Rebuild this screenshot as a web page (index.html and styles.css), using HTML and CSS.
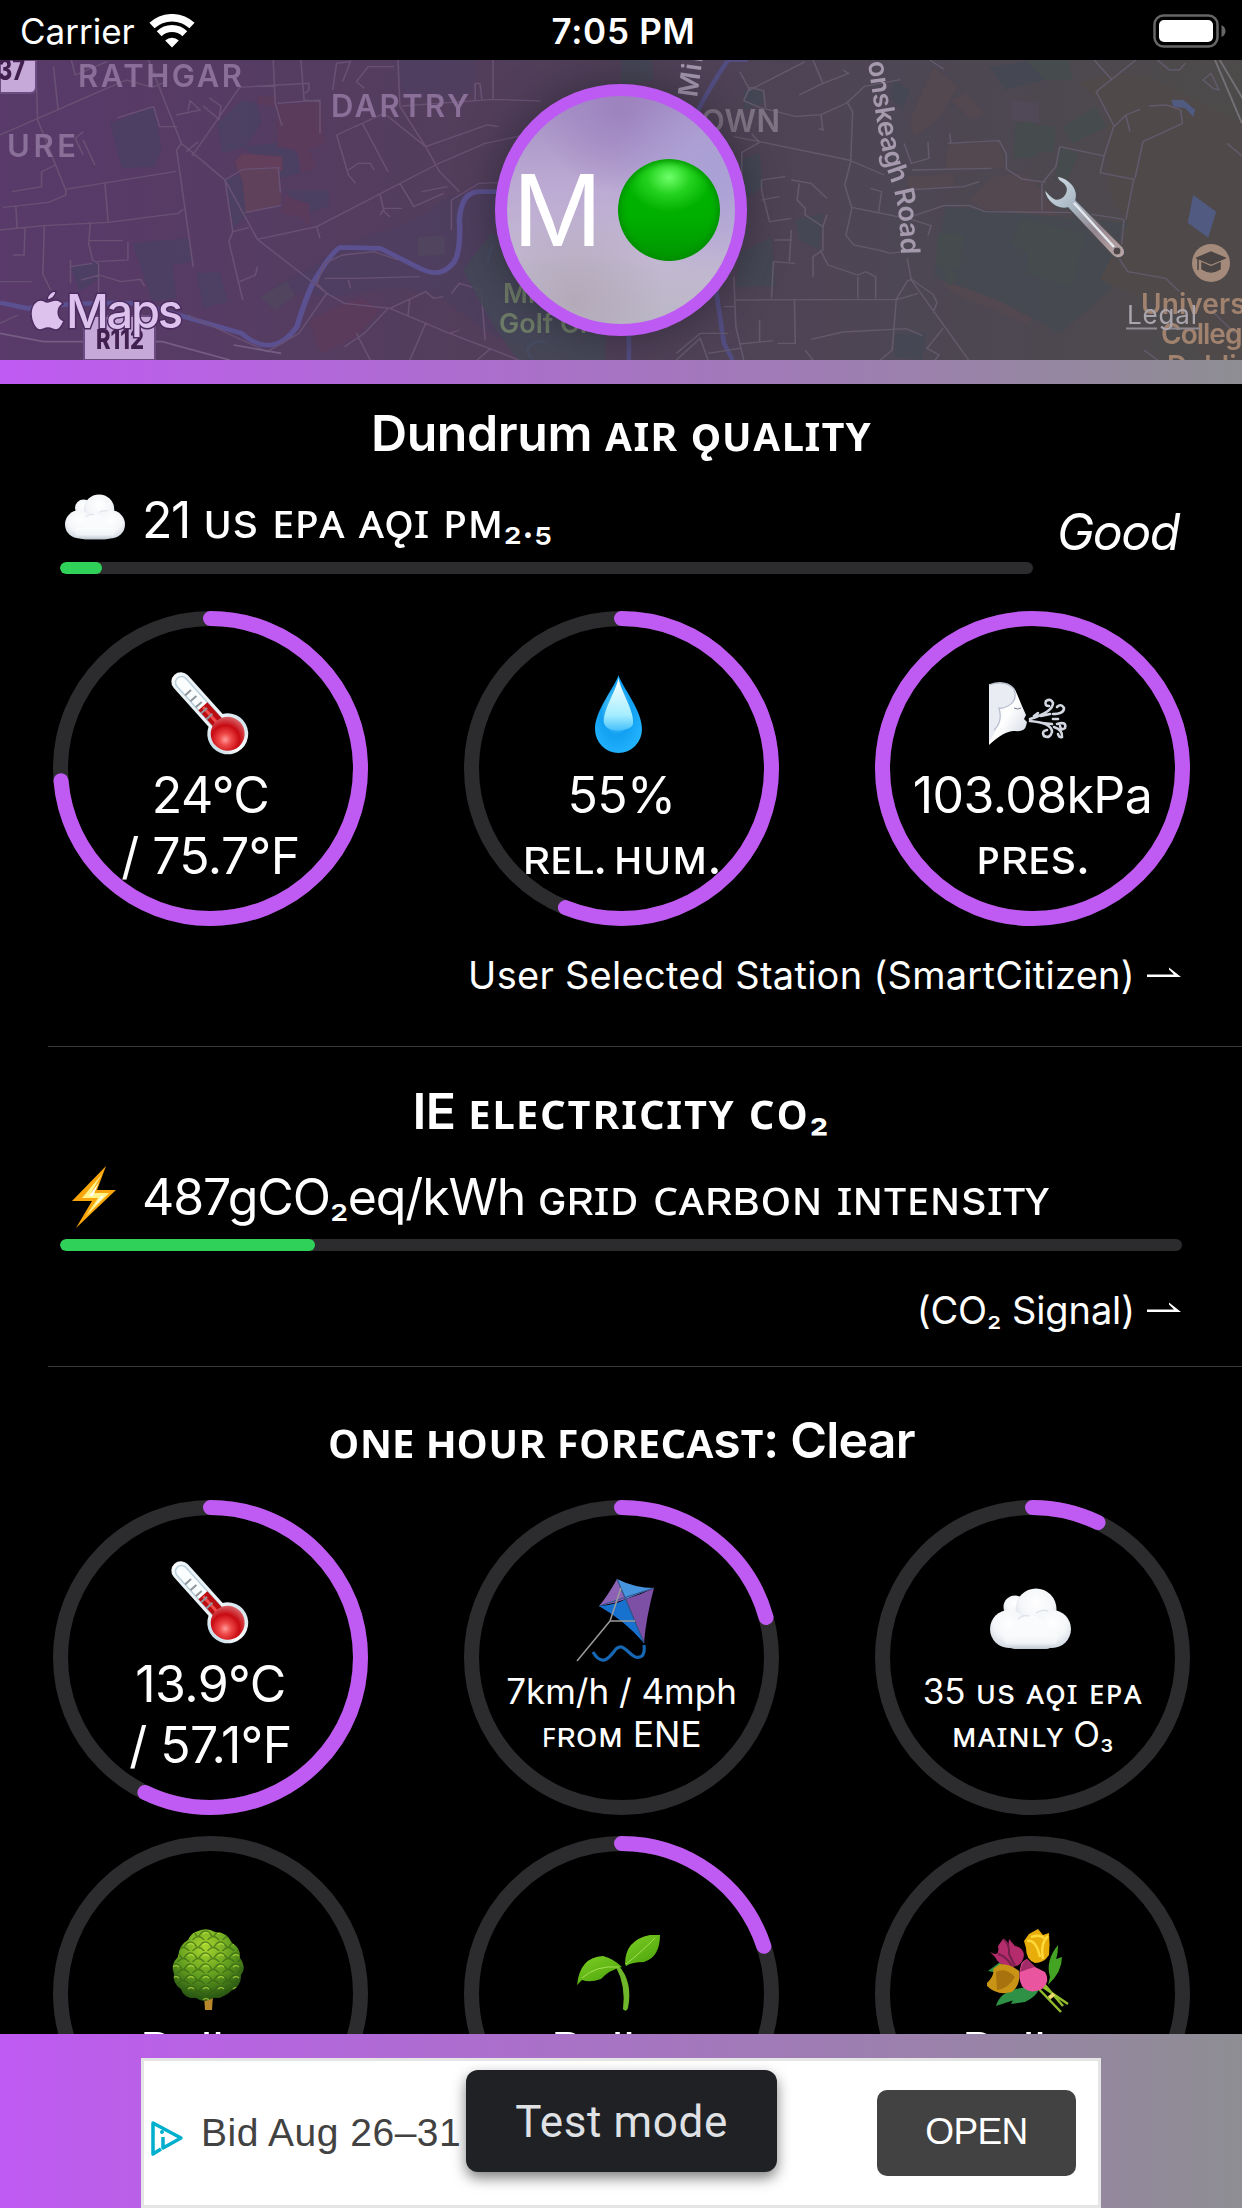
FILE: index.html
```html
<!DOCTYPE html>
<html lang="en">
<head>
<meta charset="utf-8">
<title>Air quality</title>
<link rel="stylesheet" href="styles.css">
</head>
<body>
<svg class="defs" width="0" height="0" aria-hidden="true">
  <defs>
    <linearGradient id="glass" x1="0" y1="0" x2="1" y2="0"><stop offset="0" stop-color="#c4dbe6"/><stop offset=".45" stop-color="#fff"/><stop offset="1" stop-color="#d4e4ec"/></linearGradient>
    <radialGradient id="bulb" cx=".33" cy=".58" r=".7"><stop offset="0" stop-color="#ff9a9a"/><stop offset=".25" stop-color="#ee4848"/><stop offset=".6" stop-color="#c80a12"/><stop offset="1" stop-color="#d86a6e"/></radialGradient>
    <radialGradient id="puff" cx=".5" cy=".35" r=".65"><stop offset="0" stop-color="#fff"/><stop offset=".6" stop-color="#f4f6f9"/><stop offset="1" stop-color="#d3dae2"/></radialGradient>
    <linearGradient id="puffBase" x1="0" y1="0" x2="0" y2="1"><stop offset="0" stop-color="#fbfcfd"/><stop offset=".6" stop-color="#f0f3f6"/><stop offset="1" stop-color="#bdc7d1"/></linearGradient>
    <symbol id="thermometer" viewBox="0 0 80 80" overflow="visible">
      <g transform="rotate(-42 59 59)">
        <path d="M49.500 -10a9.500 9.500 0 0 1 19 0V42a20.500 20.500 0 1 1 -19 0Z" fill="url(#glass)"/>
        <path d="M53 -9a6 6 0 0 1 12 0V45H53Z" fill="#fbfeff" stroke="#b9d0dc" stroke-width="1.500"/>
        <path d="M53 23h12v22h-12z" fill="#b90d12"/><path d="M57 24h3v22h-3z" fill="#ee4d4d"/>
        <path d="M53 3h8M53 11h8M53 19h8M53 27h8M53 35h8" stroke="#8f979c" stroke-width="2"/>
        <circle cx="59" cy="60" r="17" fill="url(#bulb)"/>
      </g>
    </symbol>
    <symbol id="cloud" viewBox="0 0 81 62" overflow="visible">
      <circle cx="25" cy="19" r="11.500" fill="url(#puff)"/><circle cx="46" cy="21" r="20.500" fill="url(#puff)"/>
      <rect x="12" y="28" width="58" height="33" rx="16" fill="url(#puffBase)"/>
      <circle cx="19" cy="41" r="19" fill="url(#puff)"/><circle cx="62" cy="41" r="19" fill="url(#puff)"/>
      <ellipse cx="40" cy="43" rx="18" ry="15" fill="#fafbfd"/>
      <path d="M14 46h54v4q-2 11-14 11H26q-11 0-12-11Z" fill="url(#puffBase)"/>
      <path d="M28 31q5-5 11-3M46 25q6-4 12-2" fill="none" stroke="#dfe4ea" stroke-width="1.500"/>
    </symbol>
  </defs>
</svg>

<header class="status">
  <div class="status-left"><span>Carrier</span>
    <svg width="46" height="34" viewBox="0 0 46 34"><g fill="none" stroke="#fff"><path d="M3 11.600A29.300 29.300 0 0 1 43 11.600" stroke-width="7.500"/><path d="M10.200 19.700A18.500 18.500 0 0 1 35.800 19.700" stroke-width="7"/></g><path d="M23 33.500L16.200 26.500A9.500 9.500 0 0 1 29.800 26.500Z" fill="#fff"/></svg>
  </div>
  <div class="status-time">7:05 PM</div>
  <div class="status-right">
    <svg width="74" height="34" viewBox="0 0 74 34"><rect x="1.500" y="1.500" width="63" height="31" rx="9" fill="none" stroke="#666" stroke-width="2.500"/><rect x="6" y="6" width="54" height="22" rx="5" fill="#fff"/><path d="M68.500 11q4 2 4 6t-4 6z" fill="#666"/></svg>
  </div>
</header>

<section class="map">
  <svg class="map-art" width="1242" height="300" viewBox="0 60 1242 300">
    <defs>
      <linearGradient id="land" x1="0" y1="0" x2="1" y2="0"><stop offset="0" stop-color="#593a6a"/><stop offset=".5" stop-color="#503f57"/><stop offset=".72" stop-color="#4d4654"/><stop offset="1" stop-color="#4d4b4a"/></linearGradient>
      <path id="roadLine" d="M868 62C874 105 880 150 890 178S900 225 901 259"/>
    </defs>
    <rect y="60" width="1242" height="300" fill="url(#land)"/>
    <g transform="scale(.396 .33333)">
      <g opacity=".8">
      <g fill="#4a4163"><path d="M278 370l110-50 20 130-20 50-80 5zM335 730l140-15 10 70-50 10 10 100-60 10zM495 820l60-5 20 90-60 20zM180 800l70-15 0 50-50 40zM550 370l60-70 40 10 10 60-40 70-60 20zM615 440l100-15 60 60 0 30-70 20zM720 570l110 0 0 50-60 20zM565 540l50-20 10 120-35 45z"/><path d="M680 870l110-70 60-60 200-80 80-70 130-20 80 60 100 300-30 120-160-40-140-120-100-30-160 30z" opacity=".45"/><path d="M1000 180h200v100l-80 20-100-20z" opacity=".35"/></g>
      <g fill="#5d3b5c"><path d="M700 315l110-10 10 125-40 20 20 50-40 20-10-70-50-10zM650 290l50 0 0 30-50-10zM720 590l60 20 0 70-20-30-50-10zM780 960l130-70 50 40-60 80-90 50z"/></g>
      <path d="M593 485l20-25 100 10 0 40-95 50z" fill="#67405b"/><path d="M608 510l95-8 8 110-90 28z" fill="#63435b"/>
      <g fill="#514760"><path d="M658 890l65-48 22 42-50 48zM1055 710l68-3v58l-68 3z"/></g>
      </g>
      <path d="M0 908L70 925Q200 905 350 910L480 955 610 1000Q690 1080 750 980 770 900 790 850 840 750 860 742L960 745 1060 805Q1110 835 1140 795 1165 770 1160 660 1165 575 1210 575H1260" fill="none" stroke="#5b5190" stroke-width="14"/>
      <path d="M1245 728l-14 56M1345 1075q-30-30 10-50h25" fill="none" stroke="#50558c" stroke-width="7"/>
      <g fill="none" stroke="#695174" stroke-width="4">
        <path d="M90 180L95 360 165 568 445 514M0 405L240 280 320 240 385 262 420 245M135 200l12 132M180 180l10 45 80-40M375 180L458 430 568 540 650 718 825 880 870 910 985 925 1135 1000 1235 1045 1310 1080M690 180l5 130 17 68M760 180l8 120 40 5 0 95M0 690L110 677 272 667 450 640 463 628M458 430l-12 20 30 250 12 102M388 320l-92 34M388 320l15 60 45 0M485 468L605 262 780 250v20l-10 10M265 550l8 115M30 575l75-15V515l35-20M8 622l115-15 43-22V568M40 618l3 65M63 683l-2 82-28 0M112 677l-4 145 20 48M228 667l-4 65 10 48 15 12 0 95M225 722h85M323 725v55l-78 5M178 780v70M178 800l55-10M205 840l45-15 55 20 50-7 10 20M0 845h80M0 970l45-25M445 345l60-15-25-28-5 30M513 318l40 40 5-40-30-25M470 455l30-30M240 495l-30-75M210 395l-20 20 20 50M568 540l45-32 90-5 5 75M568 540l20 155-10 30 35 175M618 638l92-22M588 695l40-12M650 718l150-38 8 35M800 680L1105 492 1225 430 1345 400M850 405l30 120 18 25M850 405L970 340 1075 440 1110 515 1160 575M880 510l25-20 30 0 10 20M915 370l65 145M1005 180l5 140 65 120M1015 318l230-20 120 5M1075 440L1230 375l30 5M960 585l10 50 15 15 0 0M960 645l10-20 45 0M1010 550l35 70 75-40M1065 575l65-15M1140 690v-90l70-50 50-2M605 845l40-20 5-25M820 835h80l160-5M825 880l-25-30 20-60 45-25 80-10 60 25M880 840l5 25M825 880l-70 120-80 55-200-110M870 1040l50-40 60-75M900 1000l35 80M985 925l90-50 20 20 25-5M1035 895l-5 55M1075 970l-40 110M1135 1000l25-10M1140 880l20-30 55 20 10 150M1240 1045l-35 35M700 310l110-10M840 270l10-80 35-5-20 60M900 245l30-45 65 0M900 245l20 20M1200 300v-50l12 0 5 50M1245 180v120"/>
        <path d="M0 1000l110 25h300l170 55M590 1035l120 25" stroke-width="5" stroke="#755d83"/>
      </g>
      <path d="M1240 700q70 40 90 160l200 60v160h-220q-70-100-140-270z" fill="#434956" opacity=".8"/>
    </g>
    <g transform="translate(621 0) scale(.396 .33333)">
      <path d="M320 180L270 180Q230 250 190 340M240 870l20 160 22 50M20 1000v80" stroke="#524d80" stroke-width="12" fill="none"/>
      <g opacity=".7">
      <g fill="#424955"><path d="M300 480l50-20 10 100-50 40zM300 760l80-50 10 150-100 0zM440 660l70-20-10 110-50-30zM690 1000l80 0-10 80-70-10zM310 270l50 0 0 40-50 20zM930 200l120-20 20 60-100 30zM0 180h80v60l-80 20zM690 240l40 30-20 60-30-40z"/></g>
      <g fill="#574950"><path d="M730 360l60-160 60 60-50 100-60 50zM825 435l130-10 15 80-150 5zM835 300l40-20 40 60-30 20zM880 600l60-70 80-10 60 70 20 60-180-20zM720 530l120-10 0 40-110 10zM810 850l150 20 120 60-60 40-180-90zM1040 860l40 10 0 30-30-10z"/></g>
      <path d="M820 620l460 50 0 150-170 180-160-100-160-70z" fill="#444b52"/>
      <path d="M1160 250q120-70 260 30l150 90v710h-100l-60-140-200-100 70-170-50-100 0-240z" fill="#514a49"/>
      <g fill="#434e4d"><path d="M995 370l52-10 5 110-60 5zM1050 375l48 5-5 75-45 0zM1115 380l85-60 25 60-85 50zM800 700l65 5-10 100-60-10zM1015 655l155 50-30 155-115-40 5-60-45-30zM1110 440l45 20-30 90-30-10zM1020 180l110 0 10 60-70 0zM800 770l50 60-20 30z"/></g>
      <path d="M985 300l70 10 0 60-70-10z" fill="#534a5a"/>
      </g>
      <path d="M1445 585l58 50-20 78-52-45zM1390 300l30 0 30 30-5 20-20-25-30-5z" fill="#515a80"/>
      <g fill="none" stroke="#625a6b" stroke-width="4">
        <path d="M300 215l25 55 140-85M485 180l25 70 65-30-15-10M510 250l-60 35M325 262l-15 40 40 20 90 27 65-5 65-35 45-50 90-20M505 345l5 45-10-5M325 262l35 10 5 50M570 305l15 30-5 150-15 70 18 70-15 80 20 30 80 20M285 410l65 15 225 55 90 45M350 427l-45 30 0 130M350 427l-20-25M355 540l0 30 20 95 55-10M355 540l60-10M430 540l50 10 40 45M450 550l-5 50 20 25 0 20 45 35 0 70-25 20 0 60M520 645l-10 35M430 690l-5 95M388 720h45M355 600l45-10M503 750l20 45 75 30 20-10 25 15v65M598 830v65M380 895l5-110 55 5M285 830l5 150 20 100M290 900l405-2 28-55 10-5 55 45 10 25-10 30M723 775l10 65 145 240M480 1018l80-22 160-10 40 20M395 1030l45 0-2-130M350 960v65M300 1032l85-10M260 920l30 0M140 1080l60-65 20 65M270 1000h-70l-60 60M220 1060l80-15M630 565l28 10-8 65M583 622l145 35 55 20-8 30M720 570l145-10 40-15M735 510l200-5M720 655l95-38h65l40 18 240 3 110 20M650 750l30 10 30-5M715 430l18 60 45-15-3-50M825 430l130-8 18 40v45l40 30 60 10M830 400l3 30M780 180l35 28M695 900l-10 150-30 30M813 985l-40 60 30 20-10 15M750 880l-55 20M465 1050l20 30M1108 440l-10 60-35 50v80M1108 440l112 28 15-55 10-35L1200 275l100-95M1195 180l45 60M1220 468l-10 50 85 20-20 120M1270 660l-10 120 20 35 95 20 35 40M1245 380l30-35 35-17M1275 345l10 50M1318 425l-20 110M1318 425l100-55-5-40-35-15-45 3M1470 240l20-20 20 50-15-5zM1355 180l30 30h25l15-20M1530 430l40 40M1320 1050l35 30M1490 930l60 70"/>
        <path d="M1500 180l68 190M1512 180l60 120" stroke="#737076" stroke-width="5"/>
      </g>
    </g>
    <g class="map-text">
      <path d="M0 60h36v27q0 6-6 6H0zM90 316h59q6 0 6 6v38H84v-38q0-6 6-6z" fill="#c6a9d8" stroke="#6d4c81" stroke-width="2"/>
      <g fill="#41204f" class="shield"><text x="-2" y="80" font-size="30" textLength="27" lengthAdjust="spacingAndGlyphs">37</text><text x="96" y="349" font-size="27" textLength="48" lengthAdjust="spacingAndGlyphs">R112</text></g>
      <g fill="#8a6f98" font-size="31"><text x="78" y="87" textLength="164">RATHGAR</text><text x="331" y="117" textLength="138">DARTRY</text><text x="7" y="157" textLength="69">URE</text><text x="701" y="132" fill="#7f7484" textLength="79">OWN</text></g>
      <g fill="#6f7d68" font-size="27"><text x="503" y="303">Mi</text><text x="499" y="333">Golf Cl</text></g>
      <text transform="translate(697 98) rotate(-82)" fill="#a396ad" font-size="27" textLength="51">Mill</text>
      <text fill="#a59aad" font-size="27"><textPath href="#roadLine" textLength="196">onskeagh Road</textPath></text>
      <circle cx="1211" cy="263" r="19" fill="#a48a7a"/>
      <path d="M1197 258l14-6 14 6-14 6zM1202 263v6q9 6 18 0v-6l-9 4zM1198 259v11" fill="#4b4444" stroke="#4b4444" stroke-width="1.500"/>
      <g fill="#a0826f" font-size="28"><text x="1141" y="314" textLength="122">Universit</text><text x="1161" y="344" textLength="97">College</text><text x="1167" y="376">Dublin</text></g>
    </g>
    <g transform="translate(31 291)" fill="#dcc2ec" stroke="#4d2b61" stroke-width="1.500"><path d="M16 11c3 0 5-2 9-2 3 0 5 1 7 4-7 4-6 14 1 17-2 5-5 9-8 9-3 0-4-2-8-2s-5 2-8 2C4 39 0 30 0 23 0 14 5 9 10 9c3 0 4 2 6 2zM16 9c0-5 4-9 9-9 0 5-4 9-9 9z"/></g>
    <text class="brand" x="66" y="328" font-size="47" textLength="117">Maps</text>
    <text class="legal" x="1127" y="324" font-size="26" textLength="70">Legal</text>
    <path d="M1126 328.500h31M1170 328.500h30" stroke="#8f8a92" stroke-width="2"/>
  </svg>
  <div class="avatar">
    <span class="avatar-letter">M</span><span class="avatar-dot"></span>
  </div>
  <svg class="wrench" width="84" height="84" viewBox="0 0 84 84">
    <defs><linearGradient id="steel" x1="0" y1="0" x2="1" y2="1"><stop offset="0" stop-color="#dbe5ec"/><stop offset=".35" stop-color="#a9b8c4"/><stop offset=".65" stop-color="#94868f"/><stop offset="1" stop-color="#c0aaa8"/></linearGradient></defs>
    <path d="M14 1C27 3 36 14 33 25L80 72C86 81 75 87 69 80L25 33C15 35 3 28 1 14C5 17 8 23 13 24C21 24 25 16 22 11C20 7 14 7 14 1Z" fill="url(#steel)" stroke="#4b4b50" stroke-width="1.500"/>
    <path d="M31 28L71 72" stroke="#e4e9ee" stroke-width="2.500"/><circle cx="74" cy="76" r="4" fill="#4e4549" stroke="#a79a9c"/>
  </svg>
</section>
<div class="strip"></div>

<main class="content">
  <h2 class="title t1">Dundrum <span class="sc">ᴀɪʀ ǫᴜᴀʟɪᴛʏ</span></h2>
  <div class="meter m1">
    <div class="meter-main">
      <div class="meter-label"><svg class="meter-icon" width="60" height="42"><use href="#cloud" width="60" height="46" y="-5"/></svg><span class="lbl">21 <span class="sc sc1">ᴜs ᴇᴘᴀ ᴀǫɪ ᴘᴍ<span class="sub">₂.₅</span></span></span></div>
      <div class="bar"><div class="bar-fill" style="width:42px"></div></div>
    </div>
    <div class="verdict">Good</div>
  </div>
  <div class="rings">
    <div class="ring"><svg class="dial" viewBox="0 0 315 315"><circle class="track" cx="157.500" cy="157.500" r="150"/><circle class="arc" cx="157.500" cy="157.500" r="150" pathLength="100" stroke-dasharray="73.700 100"/></svg>
      <svg class="emoji" width="80" height="80"><use href="#thermometer" width="80" height="80"/></svg><p class="big">24°C<br>/ 75.7°F</p></div>
    <div class="ring"><svg class="dial" viewBox="0 0 315 315"><circle class="track" cx="157.500" cy="157.500" r="150"/><circle class="arc" cx="157.500" cy="157.500" r="150" pathLength="100" stroke-dasharray="56.100 100"/></svg>
      <svg class="emoji" width="80" height="80" viewBox="-2 0 80 80"><defs><radialGradient id="water" cx=".45" cy=".45" r=".65"><stop offset="0" stop-color="#7cdcff"/><stop offset=".5" stop-color="#12a0f2"/><stop offset="1" stop-color="#25b6ff"/></radialGradient><linearGradient id="shine" x1="0" y1="0" x2="0" y2="1"><stop offset="0" stop-color="#fff"/><stop offset=".7" stop-color="#a6eeff"/><stop offset="1" stop-color="#45c0fb"/></linearGradient></defs><path d="M37.500 1C41 13 61 36 61 55a23.500 24 0 0 1-47 0C14 36 34 13 37.500 1Z" fill="url(#water)"/><path d="M37.500 4C40 18 54 38 52 50 50 58 26 60 23 49 21 38 35 17 37.500 4Z" fill="url(#shine)"/></svg><p class="big">55%<br><span class="sc sc2">ʀᴇʟ. ʜᴜᴍ.</span></p></div>
    <div class="ring"><svg class="dial" viewBox="0 0 315 315"><circle class="track" cx="157.500" cy="157.500" r="150"/><circle class="arc" cx="157.500" cy="157.500" r="150" pathLength="100" stroke-dasharray="100 0"/></svg>
      <svg class="emoji" width="88" height="80" viewBox="5 2 88 80"><defs><linearGradient id="face" x1="0" y1="0" x2="1" y2="1"><stop offset="0" stop-color="#eef0f6"/><stop offset=".5" stop-color="#fff"/><stop offset="1" stop-color="#ccd2de"/></linearGradient></defs>
        <path d="M8 12L24 11Q34 14 36 22L41 34 45 43 43 47 46 50 45 54Q44 60 34 59 24 58 8 73Z" fill="url(#face)"/><path d="M8 13q16-6 25 4 4 12-6 17-6 3-9 2 4 14-10 34z" fill="#e9ecf3"/><path d="M8 13q16-6 25 4 4 12-6 17-6 3-9 2 4 14-5 22" fill="none" stroke="#b9bfce" stroke-width="1.300"/><path d="M33 36q4 2 7 0" stroke="#777e8e" fill="none"/>
        <g fill="none" stroke="#d2d7e1" stroke-width="2.600" stroke-linecap="round"><path d="M49 47Q72 40 72 31 70 26 65 29 63 34 68 34M72 42Q83 42 83 36 80 31 76 35M49 49Q71 51 71 60 69 67 63 64 60 59 66 58M76 52Q86 49 84 56 80 59 79 54M73 55Q82 58 81 65 78 66 77 62M53 44l4-3M60 44l9-2M72 47h5M61 51l10 1"/></g></svg><p class="big">103.08kPa<br><span class="sc sc2">ᴘʀᴇs.</span></p></div>
  </div>
  <div class="source s1"><span>User Selected Station (SmartCitizen)</span><svg width="35" height="16" viewBox="0 1 35 16"><path d="M0 11H34L22 1.500V3.500L27 8.500H0Z" fill="#fff"/></svg></div>
  <hr class="rule">

  <h2 class="title t2">IE <span class="sc">ᴇʟᴇᴄᴛʀɪᴄɪᴛʏ ᴄᴏ<span class="sub">₂</span></span></h2>
  <div class="meter m2">
    <div class="meter-main">
      <div class="meter-label"><svg class="meter-icon bolt" width="60" height="62" viewBox="0 0 60 62"><path d="M41 0L7 35H27L11 62 51 24H32Z" fill="#f9a60c"/><path d="M37 8L17 32H33L21 50 44 27H26Z" fill="#fff38a"/><path d="M34 16L24 30h12l-7 11 10-11H28z" fill="#fffef0"/></svg><span class="lbl lbl2">487gCO<span class="sub">₂</span>eq/kWh <span class="sc sc3">ɢʀɪᴅ ᴄᴀʀʙᴏɴ ɪɴᴛᴇɴsɪᴛʏ</span></span></div>
      <div class="bar"><div class="bar-fill" style="width:255px"></div></div>
    </div>
  </div>
  <div class="source s2"><span>(CO<span class="sub">₂</span> Signal)</span><svg width="35" height="16" viewBox="0 1 35 16"><path d="M0 11H34L22 1.500V3.500L27 8.500H0Z" fill="#fff"/></svg></div>
  <hr class="rule">

  <h2 class="title t3"><span class="sc">ᴏɴᴇ ʜᴏᴜʀ ꜰᴏʀᴇᴄᴀsᴛ:</span> Clear</h2>
  <div class="rings forecast">
    <div class="ring"><svg class="dial" viewBox="0 0 315 315"><circle class="track" cx="157.500" cy="157.500" r="150"/><circle class="arc" cx="157.500" cy="157.500" r="150" pathLength="100" stroke-dasharray="57.200 100"/></svg>
      <svg class="emoji" width="80" height="80"><use href="#thermometer" width="80" height="80"/></svg><p class="big">13.9°C<br>/ 57.1°F</p></div>
    <div class="ring mid"><svg class="dial" viewBox="0 0 315 315"><circle class="track" cx="157.500" cy="157.500" r="150"/><circle class="arc" cx="157.500" cy="157.500" r="150" pathLength="100" stroke-dasharray="20.700 100"/></svg>
      <svg class="emoji kite" width="100" height="80" viewBox="-1 10 100 80"><path d="M47 9Q37 27 29 36Q43 34 56 29Z" fill="#8d62b4"/><path d="M47 9Q65 18 84 18Q70 23 56 29Z" fill="#4795df"/><path d="M84 18Q76 48 74 73L56 29Q70 25 84 18Z" fill="#7d4fa5"/><path d="M29 36Q45 35 56 29L74 73Q55 51 29 36Z" fill="#1671cf"/><path d="M47 9L74 73M29 36L84 18" stroke="#35558c" stroke-width="1.200"/><path d="M51 18L40 51 65 51M40 51L7 91" fill="none" stroke="#9b9b9b" stroke-width="1.500"/><path d="M23 82C33 99 41 85 46 79C55 70 61 93 72 86Q75 83 74 75" fill="none" stroke="#1667b4" stroke-width="3.200"/></svg><p class="small">7km/h / 4mph<br><span class="sc">ꜰʀᴏᴍ</span> ENE</p></div>
    <div class="ring mid"><svg class="dial" viewBox="0 0 315 315"><circle class="track" cx="157.500" cy="157.500" r="150"/><circle class="arc" cx="157.500" cy="157.500" r="150" pathLength="100" stroke-dasharray="7.200 100"/></svg>
      <svg class="emoji" width="81" height="80"><use href="#cloud" width="81" height="62" y="8"/></svg><p class="small">35 <span class="sc sc4">ᴜs ᴀǫɪ ᴇᴘᴀ</span><br><span class="sc sc4">ᴍᴀɪɴʟʏ</span> O<span class="sub">₃</span></p></div>
    <div class="ring low"><svg class="dial" viewBox="0 0 315 315"><circle class="track" cx="157.500" cy="157.500" r="150"/></svg>
      <svg class="emoji" width="80" height="82" viewBox="0 0 80 82"><defs><radialGradient id="leafy" cx=".45" cy=".25" r=".75"><stop offset="0" stop-color="#a9d62e"/><stop offset=".55" stop-color="#609c1d"/><stop offset="1" stop-color="#234f12"/></radialGradient><pattern id="tuft" width="15" height="11" patternUnits="userSpaceOnUse"><path d="M1 7q6-10 13 0M-6 12q6-9 13 0M9 12q6-9 13 0" fill="none" stroke="#315f10" stroke-width="1.500" opacity=".6"/><path d="M5 5q3-3 6 0" stroke="#c4ed45" stroke-width="1.500" fill="none" opacity=".6"/></pattern><path id="crown" d="M30 2q9-4 17 1 12 0 17 11 9 5 8 15 7 9 1 17 0 12-10 16-8 8-18 7-9 6-17 0-12 1-15-9-9-6-7-15-4-10 4-17 1-12 10-17 3-7 10-9Z"/></defs><path d="M36 66h9l-1 15h-7z" fill="#b8862b"/><use href="#crown" fill="url(#leafy)"/><use href="#crown" fill="url(#tuft)"/></svg><p class="big">Pollen</p></div>
    <div class="ring low"><svg class="dial" viewBox="0 0 315 315"><circle class="track" cx="157.500" cy="157.500" r="150"/><circle class="arc" cx="157.500" cy="157.500" r="150" pathLength="100" stroke-dasharray="19.900 100"/></svg>
      <svg class="emoji" width="86" height="82" viewBox="0 -3 86 82"><defs><linearGradient id="leaf" x1="0" y1="0" x2=".7" y2="1"><stop offset="0" stop-color="#7fcf24"/><stop offset="1" stop-color="#4ea60d"/></linearGradient></defs><path d="M43 34Q57 50 52 76Q50 81 47 77Q50 54 40 35Z" fill="#6fb62a"/><path d="M1 53Q4 25 27 24Q38 27 46 35Q33 38 25 47Q14 51 6 48Z" fill="url(#leaf)"/><path d="M49 32Q49 8 74 3L84 3Q84 25 68 30Q56 30 50 34Z" fill="url(#leaf)"/><path d="M6 46Q20 33 43 35M50 32Q63 22 79 6" fill="none" stroke="#a7df55"/></svg><p class="big">Pollen</p></div>
    <div class="ring low"><svg class="dial" viewBox="0 0 315 315"><circle class="track" cx="157.500" cy="157.500" r="150"/></svg>
      <svg class="emoji" width="86" height="82" viewBox="9 7 86 82"><path d="M72 55Q67 39 80 23Q80 32 78 37L84 35Q84 50 70 63Z" fill="#45a323"/><path d="M18 84Q22 69 43 66L62 62Q54 76 42 76ZM33 82Q38 69 61 67Q58 75 47 80M10 49l12-9 7 13z" fill="#2f9145"/><path d="M58 64L83 90M62 63L90 82M66 62L85 84" stroke="#92bd2d" stroke-width="2.500"/><path d="M71 76l5-4" stroke="#ead86d" stroke-width="4"/><path d="M12 30Q22 36 20 24L25 17Q30 20 30 26L31 17 37 24Q45 25 46 33 45 44 34 45 20 43 17 35Z" fill="#b42c6b"/><path d="M25 17Q32 21 31 32L37 44M20 32q8 2 14 12" stroke="#75204b" stroke-width="2" fill="none"/><path d="M46 19L51 12 60 7 65 13 71 11Q72 23 71 33 66 41 57 41 48 38 48 26Z" fill="#e8ad09"/><path d="M53 15q9-3 13 1M49 19q9-2 13 16M70 14q-8 7-5 23" stroke="#ffd83a" stroke-width="2.500" fill="none"/><path d="M9 61Q17 53 15 47L22 42Q33 42 41 49 43 63 34 70 19 74 9 64Z" fill="#c99415"/><path d="M18 50q10-5 19 5-7 12-18 13" fill="#a8730e"/><path d="M42 47Q43 39 49 37L57 45 67 50Q73 59 64 67 51 73 44 64 40 56 42 47Z" fill="#e9559e"/><path d="M43 46q1-6 6-9l8 8q-8 2-15 5z" fill="#a32b67"/></svg><p class="big">Pollen</p></div>
  </div>
</main>

<footer class="dock">
  <div class="ad">
    <svg class="choices" width="36" height="40" viewBox="0 0 36 40"><path d="M13 31l-8 5V5L33 20 15 30V19" fill="none" stroke="#00aecd" stroke-width="3.500" stroke-linejoin="round"/><circle cx="14" cy="14" r="2" fill="#00aecd"/></svg>
    <span class="ad-copy">Bid Aug 26–31</span>
    <span class="ad-open">OPEN</span>
    <div class="toast">Test mode</div>
  </div>
</footer>
</body>
</html>
```
FILE: styles.css
```css
* { box-sizing: border-box; }
body { margin: 0; width: 1242px; height: 2208px; overflow: hidden; display: flex; flex-direction: column; background: #000; color: #fff; font-family: "Inter", "Noto Sans", "DejaVu Sans", sans-serif; }
p, h2 { margin: 0; }
svg { display: block; flex: none; }
.defs { position: absolute; }

.status { flex: none; height: 60px; display: grid; grid-template-columns: 1fr auto 1fr; align-items: center; padding: 0 15px 0 20px; font-size: 35px; line-height: 62px; }
.status-left { display: flex; align-items: center; gap: 14px; }
.status-time { font-weight: 600; letter-spacing: .7px; }
.status-right { display: flex; justify-content: flex-end; }

.map { flex: none; position: relative; height: 300px; overflow: hidden; }
.map-text { font-weight: 600; }
.shield { font-weight: 800; }
.brand { fill: #dcc2ec; stroke: #4d2b61; stroke-width: 3px; paint-order: stroke; font-weight: 500; }
.legal { fill: #aaa5ad; }
.avatar { position: absolute; left: 495px; top: 24px; width: 252px; height: 252px; border: 12px solid #bd5af4; border-radius: 50%; display: flex; align-items: center; background: radial-gradient(circle at 90% 35%, #a9a0d6 0, rgba(169,160,214,0) 40%), radial-gradient(circle at 50% 5%, #9d83bf 0, rgba(157,131,191,0) 35%), radial-gradient(circle at 30% 90%, #b3a9b9 0, rgba(179,169,185,0) 35%), linear-gradient(#a58fc4, #bcaad3 40%, #c3b8d2 70%, #bbb8c6); box-shadow: 0 0 40px rgba(30,30,40,.55); }
.avatar-letter { width: 101px; text-align: center; font-size: 99px; line-height: 120px; }
.avatar-dot { width: 102px; height: 102px; margin-left: 10px; border-radius: 50%; background: radial-gradient(ellipse 42% 34% at 50% 18%, #6eff6a 0, rgba(60,230,50,.6) 50%, rgba(0,184,0,0) 100%), linear-gradient(#00b800, #00b000 55%, #009600); box-shadow: inset 0 0 7px 2px #008a00; }
.wrench { position: absolute; left: 1043px; top: 115px; }

.strip { flex: none; height: 24px; background: linear-gradient(90deg, #bf5af2, #8e8e93); }

.content { flex: none; height: 1650px; overflow: hidden; padding-top: 19px; }
.title { text-align: center; font-size: 50px; font-weight: 600; line-height: 60px; letter-spacing: -.4px; white-space: nowrap; }
.sc { line-height: 0; }
.t1 .sc { letter-spacing: .1px; }
.t2 .sc { letter-spacing: .8px; }
.sub { font-size: .86em; line-height: 0; }
.t2 { margin-top: 34px; }
.t3 { margin-top: 43px; letter-spacing: -.8px; }

.meter { display: flex; gap: 27px; padding: 0 60px; }
.m1 { margin-top: 27px; }
.m2 { margin-top: 26px; }
.meter-main { flex: 1; }
.meter-label { height: 60px; display: flex; align-items: center; gap: 17px; margin-bottom: 12px; padding-left: 5px; white-space: nowrap; }
.meter-icon { overflow: visible; }
.lbl { font-size: 50px; line-height: 60px; letter-spacing: -1.400px; }
.sc1 { letter-spacing: -.5px; }
.lbl2 { letter-spacing: -1.100px; }
.sc3 { letter-spacing: -.3px; }
.bar { height: 12px; border-radius: 6px; background: #2c2c2e; overflow: hidden; }
.bar-fill { height: 12px; border-radius: 6px; background: #30d158; }
.verdict { width: 122px; font-size: 50px; line-height: 60px; padding-top: 12px; margin-left: -3px; margin-right: 3px; font-style: italic; letter-spacing: -1.500px; white-space: nowrap; }

.rings { display: grid; grid-template-columns: repeat(3, 315px); gap: 21px 96px; padding-left: 53px; margin-top: 37px; }
.forecast { margin-top: 30px; }
.ring { position: relative; height: 315px; display: flex; flex-direction: column; align-items: center; gap: 11px; padding-top: 63px; text-align: center; white-space: nowrap; }
.mid { padding-top: 80px; gap: 10px; }
.low { padding-top: 93px; gap: 10px; }
.dial { position: absolute; inset: 0; width: 315px; height: 315px; transform: rotate(-90deg); z-index: -1; }
.track { fill: none; stroke: #2c2c2e; stroke-width: 15; }
.arc { fill: none; stroke: #bf5af2; stroke-width: 15; stroke-linecap: round; }
.emoji { overflow: visible; margin-left: -5px; }
.big { font-size: 50px; line-height: 61px; letter-spacing: -.6px; }
.sc2 { letter-spacing: -.6px; word-spacing: -7px; }
.sc4 { letter-spacing: .5px; }
.small { font-size: 35px; line-height: 43px; }

.source { display: flex; justify-content: flex-end; align-items: center; gap: 12px; padding-right: 60px; font-size: 38px; line-height: 48px; letter-spacing: .28px; white-space: nowrap; }
.s1 { margin-top: 25px; }
.s2 { margin-top: 35px; letter-spacing: -.1px; }
.rule { height: 1px; border: 0; margin: 47px 0 0 48px; background: #38383a; }
.s2 + .rule { margin-top: 32px; }

.dock { flex: none; height: 174px; padding: 24px 141px 0; background: linear-gradient(90deg, #bf5af2, #8e8e93); }
.ad { position: relative; height: 150px; background: #fff; border: 3px solid #e5e5e5; display: flex; align-items: center; padding: 0 22px 0 4px; font-family: "Liberation Sans", Arial, sans-serif; }
.choices { margin-top: 10px; }
.ad-copy { margin-left: 17px; font-size: 39px; letter-spacing: .5px; color: #424242; }
.ad-open { margin-left: auto; width: 199px; height: 86px; border-radius: 10px; background: #424242; color: #fff; font-size: 37px; line-height: 84px; letter-spacing: -.6px; text-align: center; }
.toast { position: absolute; left: 322px; top: 9px; width: 311px; height: 102px; border-radius: 12px; background: #202124; color: #dfe1e5; font: 44px/104px Roboto, sans-serif; letter-spacing: .6px; text-align: center; box-shadow: 0 6px 14px rgba(0,0,0,.5); }
```
